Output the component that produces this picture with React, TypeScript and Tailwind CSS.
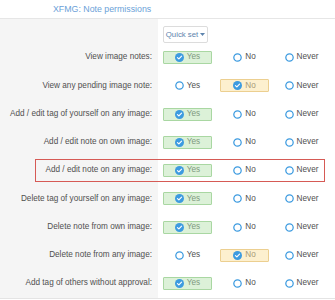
import * as React from "react"

type Choice = "yes" | "no" | "never"

const rows: { label: string; value: Choice; highlight?: boolean }[] = [
  { label: "View image notes:", value: "yes" },
  { label: "View any pending image note:", value: "no" },
  { label: "Add / edit tag of yourself on any image:", value: "yes" },
  { label: "Add / edit note on own image:", value: "yes" },
  { label: "Add / edit note on any image:", value: "yes", highlight: true },
  { label: "Delete tag of yourself on any image:", value: "yes" },
  { label: "Delete note from own image:", value: "yes" },
  { label: "Delete note from any image:", value: "no" },
  { label: "Add tag of others without approval:", value: "yes" },
]

const options: { key: Choice; label: string }[] = [
  { key: "yes", label: "Yes" },
  { key: "no", label: "No" },
  { key: "never", label: "Never" },
]

function Radio({ checked }: { checked: boolean }) {
  if (checked) {
    return (
      <svg width="9" height="9" viewBox="0 0 10 10" className="shrink-0">
        <circle cx="5" cy="5" r="5" fill="#3d9be0" />
        <path d="M2.7 5.1 4.3 6.6 7.3 3.5" fill="none" stroke="#fff" strokeWidth="1.3" strokeLinecap="round" strokeLinejoin="round" />
      </svg>
    )
  }
  return (
    <svg width="9" height="9" viewBox="0 0 10 10" className="shrink-0">
      <circle cx="5" cy="5" r="4.1" fill="#fff" stroke="#3d9be0" strokeWidth="1.4" />
    </svg>
  )
}

function Option({ label, checked, kind }: { label: string; checked: boolean; kind: Choice }) {
  const box = !checked
    ? "border-transparent text-[#505050]"
    : kind === "yes"
      ? "border-[#a9d7a2] bg-[#dcf1d8] text-[#7f9a7f]"
      : "border-[#eccf90] bg-[#fdf0cf] text-[#a89a78]"
  return (
    <div className={`flex h-[13px] w-[49px] items-center justify-center gap-[3px] rounded-[1px] border ${box}`}>
      <Radio checked={checked} />
      <span>{label}</span>
    </div>
  )
}

export default function App() {
  return (
    <div className="w-[335px] bg-white text-[8.2px] leading-none" style={{ fontFamily: '"Liberation Sans", Arial, sans-serif' }}>
      <div className="h-[19px] border-b border-[#e6e6e6] pl-[53px] pt-[5px] text-[8.8px] text-[#6b9fd8]">
        XFMG: Note permissions
      </div>
      <div className="relative border-b border-[#e4e4e4]">
        <div className="absolute inset-y-0 left-0 w-[158px] bg-[#f5f5f5]" />
        <div className="relative flex h-[24.4px] pt-[7px]">
          <div className="w-[158px] shrink-0" />
          <div className="ml-[5px] flex h-[17px] w-[45px] items-center justify-center gap-[2px] rounded-[2px] border border-[#dcdcdc] bg-white text-[7.8px] text-[#5d84ad]">
            <span>Quick set</span>
            <svg width="5" height="3" viewBox="0 0 5 3">
              <path d="M0 0h5L2.5 3z" fill="#5d84ad" />
            </svg>
          </div>
        </div>
        {rows.map((r) => (
          <div key={r.label} className="relative flex h-[28.25px] items-center">
            {r.highlight ? (
              <div className="pointer-events-none absolute inset-y-[2.5px] left-[35px] w-[290px] border-[1.5px] border-[#d65a55]" />
            ) : null}
            <div className="w-[152px] shrink-0 text-right text-[#505050]">{r.label}</div>
            <div className="ml-[11px] flex gap-[8px]">
              {options.map((o) => (
                <Option key={o.key} label={o.label} kind={o.key} checked={r.value === o.key} />
              ))}
            </div>
          </div>
        ))}
      </div>
    </div>
  )
}
